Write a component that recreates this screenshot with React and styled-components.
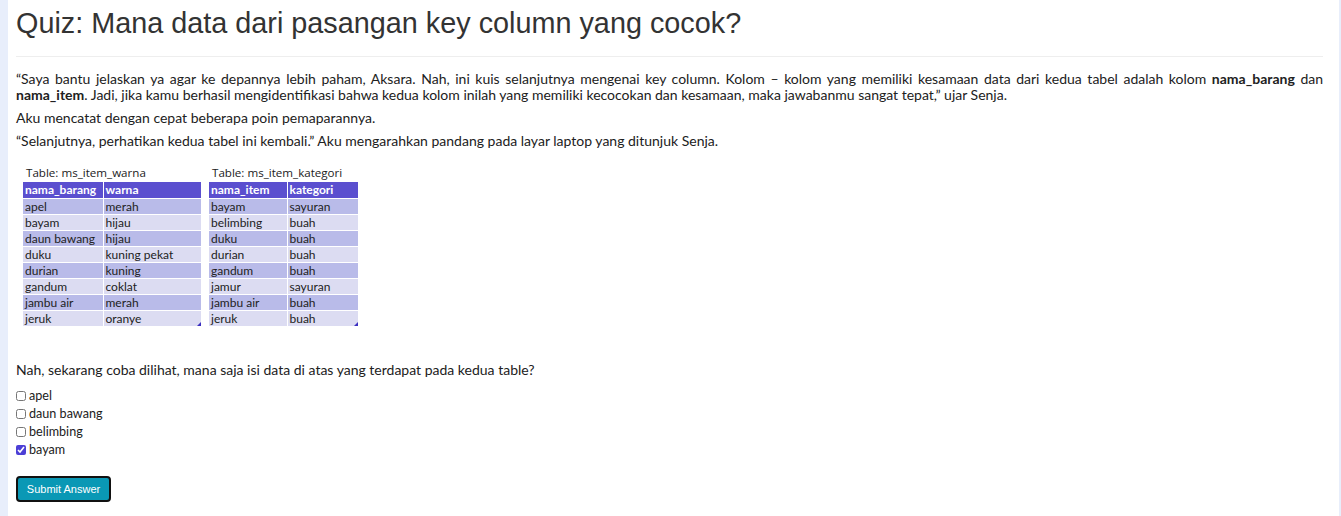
import * as React from "react"
import styled, { createGlobalStyle } from "styled-components"

const GlobalStyle = createGlobalStyle`
    html, body {
        margin: 0;
        padding: 0;
        background: #e8eefb;
    }
    body {
        font-family: Lato, "Open Sans", sans-serif;
        color: #212121;
    }
`

const Page = styled.div`
    margin: 0 2px 0 8px;
    background: #ffffff;
    min-height: 516px;
    padding: 0 16px 12px 8px;
    box-sizing: border-box;
`

const Title = styled.h1`
    font-family: "Liberation Sans", Arial, sans-serif;
    font-weight: 400;
    font-size: 28.8px;
    line-height: 34px;
    color: #333333;
    margin: 0;
    padding: 6px 0 16px 0;
    border-bottom: 1px solid #eeeeee;
`

const Body = styled.div`
    padding-top: 14px;
    font-size: 14px;
    line-height: 16px;
`

const Para = styled.p`
    margin: 0 0 7px 0;
    text-align: ${p => p.justify ? "justify" : "left"};
`

const Tables = styled.div`
    display: flex;
    gap: 8px;
    padding: 11px 0 0 7px;
    margin-bottom: 35px;
`

const TableBox = styled.div`
    position: relative;
    font-family: Lato, "Open Sans", sans-serif;
    font-size: 12px;
`

const Caption = styled.div`
    font-family: "Open Sans", sans-serif;
    font-size: 11.6px;
    line-height: 12px;
    color: #222;
    padding: 0 0 3px 3px;
`

const Grid = styled.table`
    border-collapse: collapse;
    border-spacing: 0;
`

const Cell = styled.td`
    height: 16px;
    padding: 0 0 0 2px;
    line-height: 15px;
    width: ${p => p.w}px;
    box-sizing: border-box;
    border-right: ${p => p.last ? "0" : "1px solid #ffffff"};
    border-bottom: 1px solid #ffffff;
    background: ${p => p.head ? "#5b4fcf" : p.odd ? "#b9bbe9" : "#dcdcf2"};
    color: ${p => p.head ? "#ffffff" : "#222222"};
    font-weight: ${p => p.head ? 700 : 400};
    vertical-align: middle;
`

const Corner = styled.svg`
    position: absolute;
    right: 0;
    bottom: 1px;
`

const Options = styled.div`
    display: flex;
    flex-direction: column;
    margin-top: 9px;
`

const Option = styled.label`
    display: flex;
    align-items: center;
    height: 18px;
    font-size: 12.6px;
`

const Box = styled.input`
    width: 10px;
    height: 10px;
    margin: 0 3px 0 0;
    accent-color: #4c3fd6;
`

const SubmitButton = styled.button`
    margin-top: 17px;
    background: #0a98b5;
    color: #ffffff;
    border: 2px solid #111111;
    border-radius: 4px;
    font-family: "Liberation Sans", Arial, sans-serif;
    font-size: 11px;
    padding: 0 8px;
    height: 26px;
    width: 95px;
`

const warna = [
    ["apel", "merah"], ["bayam", "hijau"], ["daun bawang", "hijau"], ["duku", "kuning pekat"],
    ["durian", "kuning"], ["gandum", "coklat"], ["jambu air", "merah"], ["jeruk", "oranye"],
]

const kategori = [
    ["bayam", "sayuran"], ["belimbing", "buah"], ["duku", "buah"], ["durian", "buah"],
    ["gandum", "buah"], ["jamur", "sayuran"], ["jambu air", "buah"], ["jeruk", "buah"],
]

const DataTable = ({name, head, rows, widths}) => (
    <TableBox>
        <Caption>Table: {name}</Caption>
        <Grid>
            <tbody>
                <tr>
                    <Cell head w={widths[0]}>{head[0]}</Cell>
                    <Cell head last w={widths[1]}>{head[1]}</Cell>
                </tr>
                {rows.map((r, i) => (
                    <tr key={i}>
                        <Cell odd={i % 2 === 0} w={widths[0]}>{r[0]}</Cell>
                        <Cell odd={i % 2 === 0} last w={widths[1]}>{r[1]}</Cell>
                    </tr>
                ))}
            </tbody>
        </Grid>
        <Corner width="4" height="4" viewBox="0 0 4 4">
            <path d="M4 0 L4 4 L0 4 Z" fill="#3b2fc0" />
        </Corner>
    </TableBox>
)

const App = () => {
    const [checked, setChecked] = React.useState({bayam: true})
    const opts = ["apel", "daun bawang", "belimbing", "bayam"]
    return (
        <>
            <GlobalStyle />
            <Page>
                <Title>Quiz: Mana data dari pasangan key column yang cocok?</Title>
                <Body>
                    <Para justify>
                        “Saya bantu jelaskan ya agar ke depannya lebih paham, Aksara. Nah, ini kuis selanjutnya mengenai key column. Kolom – kolom yang memiliki kesamaan data dari kedua tabel adalah kolom <b>nama_barang</b> dan <b>nama_item</b>. Jadi, jika kamu berhasil mengidentifikasi bahwa kedua kolom inilah yang memiliki kecocokan dan kesamaan, maka jawabanmu sangat tepat,” ujar Senja.
                    </Para>
                    <Para>Aku mencatat dengan cepat beberapa poin pemaparannya.</Para>
                    <Para>“Selanjutnya, perhatikan kedua tabel ini kembali.” Aku mengarahkan pandang pada layar laptop yang ditunjuk Senja.</Para>
                    <Tables>
                        <DataTable name="ms_item_warna" head={["nama_barang", "warna"]} rows={warna} widths={[80, 98]} />
                        <DataTable name="ms_item_kategori" head={["nama_item", "kategori"]} rows={kategori} widths={[78, 71]} />
                    </Tables>
                    <Para>Nah, sekarang coba dilihat, mana saja isi data di atas yang terdapat pada kedua table?</Para>
                    <Options>
                        {opts.map(o => (
                            <Option key={o}>
                                <Box type="checkbox" checked={!!checked[o]} onChange={() => setChecked({...checked, [o]: !checked[o]})} />
                                {o}
                            </Option>
                        ))}
                    </Options>
                    <SubmitButton>Submit Answer</SubmitButton>
                </Body>
            </Page>
        </>
    )
}

export default App
